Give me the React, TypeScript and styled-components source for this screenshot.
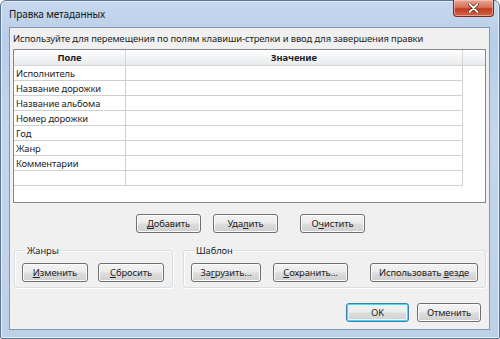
import { Fragment } from "react";
import styled, { createGlobalStyle } from "styled-components";

const GlobalStyle = createGlobalStyle`
  html, body {
    margin: 0;
    padding: 0;
    background: #ffffff;
  }
  body {
    font-family: "Noto Sans", "Open Sans", sans-serif;
    font-size: 9.4px;
    letter-spacing: -0.1px;
    color: #1e1e1e;
  }
`;

const Window = styled.div`
  width: 500px;
  height: 339px;
  box-sizing: border-box;
  display: flex;
  flex-direction: column;
  padding: 0 9px 8px 8px;
  border: 1px solid #5d7590;
  border-radius: 6px 6px 2px 2px;
  background: linear-gradient(180deg, #c6d8ee 0%, #b8cde8 12%, #c3d6ec 40%, #bcd0e8 100%);
  box-shadow: inset 0 0 0 1px #e4eef9;
`;

const TitleBar = styled.div`
  height: 26px;
  display: flex;
  align-items: flex-start;
  justify-content: space-between;
`;

const Title = styled.span`
  margin-top: 6px;
  font-size: 10px;
  color: #101820;
`;

const CloseButton = styled.div`
  width: 41px;
  height: 17px;
  margin-top: -1px;
  margin-right: -4px;
  box-sizing: border-box;
  display: flex;
  align-items: center;
  justify-content: center;
  border: 1px solid #7a2a20;
  border-top: none;
  border-radius: 0 0 4px 4px;
  background: linear-gradient(180deg, #e8a493 0%, #d7735b 45%, #c23c1f 55%, #d2654a 100%);
  box-shadow: inset 0 0 0 1px rgba(255, 220, 210, 0.5);
`;

const Client = styled.div`
  flex: 1;
  box-sizing: border-box;
  display: flex;
  flex-direction: column;
  padding: 0 3px;
  border: 1px solid #8298b2;
  background: #f0f0f0;
`;

const Hint = styled.div`
  height: 21px;
  display: flex;
  align-items: center;
`;

const ListView = styled.div`
  height: 154px;
  box-sizing: border-box;
  border: 1px solid #828790;
  background: #ffffff;
  display: flex;
  flex-direction: column;
`;

const Grid = styled.div`
  display: grid;
  grid-template-columns: 112px 337px 1fr;
`;

const HeaderCell = styled.div<{ $filler?: boolean }>`
  height: 15px;
  display: flex;
  align-items: center;
  justify-content: center;
  font-weight: 700;
  background: linear-gradient(180deg, #ffffff 0%, #f3f4f6 50%, #e9eaec 100%);
  border-bottom: 1px solid #d5d5d5;
  border-right: ${(p) => (p.$filler ? "none" : "1px solid #d5d5d5")};
`;

const Cell = styled.div<{ $filler?: boolean }>`
  height: 14px;
  display: flex;
  align-items: center;
  padding-left: 2px;
  border-bottom: ${(p) => (p.$filler ? "none" : "1px solid #d0d0d0")};
  border-right: ${(p) => (p.$filler ? "none" : "1px solid #d0d0d0")};
  white-space: nowrap;
`;

const ButtonRow = styled.div`
  display: flex;
  gap: 12px;
  margin-top: 11px;
  padding-left: 123px;
`;

const Button = styled.button<{ $w?: number; $default?: boolean; $push?: number }>`
  width: ${(p) => p.$w ?? 65}px;
  height: 19px;
  margin-left: ${(p) => p.$push ?? 0}px;
  padding: 0;
  font-family: "Noto Sans", "Open Sans", sans-serif;
  font-size: 9.4px;
  letter-spacing: -0.1px;
  color: #1e1e1e;
  border: 1px solid ${(p) => (p.$default ? "#3c7fb1" : "#707070")};
  border-radius: 3px;
  background: linear-gradient(
    180deg,
    #f3f3f3 0%,
    #ebebeb 48%,
    #dddddd 52%,
    #cfcfcf 100%
  );
  box-shadow: ${(p) =>
    p.$default
      ? "inset 0 0 0 1px #48d6fa, inset 0 0 0 2px #e6f6fd"
      : "inset 0 0 0 1px #fcfcfc"};
  & u {
    text-decoration-thickness: 1px;
    text-underline-offset: 1px;
  }
`;

const GroupRow = styled.div`
  display: flex;
  gap: 10px;
  margin-top: 11px;
  padding-left: 1px;
`;

const Group = styled.fieldset<{ $w: number }>`
  width: ${(p) => p.$w}px;
  height: 44px;
  box-sizing: border-box;
  margin: 0;
  padding: 6px 0 0 7px;
  display: flex;
  align-items: flex-start;
  border: 1px solid #d5dfe5;
  border-radius: 3px;
  box-shadow: inset 1px 1px 0 #ffffff, 1px 1px 0 #ffffff;
`;

const Legend = styled.legend`
  padding: 0 1px;
  margin-left: 4px;
  font-size: 9.4px;
  color: #1e1e1e;
`;

const Footer = styled.div`
  display: flex;
  justify-content: flex-end;
  gap: 8px;
  margin-top: 15px;
  padding-right: 5px;
`;

const rows = [
  "Исполнитель",
  "Название дорожки",
  "Название альбома",
  "Номер дорожки",
  "Год",
  "Жанр",
  "Комментарии",
  "",
];

function Label({ text, at }: { text: string; at: number }) {
  return (
    <>
      {text.slice(0, at)}
      <u>{text[at]}</u>
      {text.slice(at + 1)}
    </>
  );
}

export default function App() {
  return (
    <>
      <GlobalStyle />
      <Window>
        <TitleBar>
          <Title>Правка метаданных</Title>
          <CloseButton>
            <svg width="11" height="10" viewBox="0 0 11 10">
              <path
                d="M1.5 1 L9.5 9 M9.5 1 L1.5 9"
                stroke="#5a1a10"
                strokeWidth="3.2"
                strokeLinecap="round"
              />
              <path
                d="M1.5 1 L9.5 9 M9.5 1 L1.5 9"
                stroke="#ffffff"
                strokeWidth="1.8"
                strokeLinecap="round"
              />
            </svg>
          </CloseButton>
        </TitleBar>
        <Client>
          <Hint>
            Используйте для перемещения по полям клавиши-стрелки и ввод для
            завершения правки
          </Hint>
          <ListView>
            <Grid>
              <HeaderCell>Поле</HeaderCell>
              <HeaderCell>Значение</HeaderCell>
              <HeaderCell $filler />
              {rows.map((r, i) => (
                <Fragment key={i}>
                  <Cell>{r}</Cell>
                  <Cell />
                  <Cell $filler />
                </Fragment>
              ))}
            </Grid>
          </ListView>
          <ButtonRow>
            <Button>
              <Label text="Добавить" at={0} />
            </Button>
            <Button>
              <Label text="Удалить" at={3} />
            </Button>
            <Button $push={10}>
              <Label text="Очистить" at={1} />
            </Button>
          </ButtonRow>
          <GroupRow>
            <Group $w={160}>
              <Legend>Жанры</Legend>
              <Button $w={66}>
                <Label text="Изменить" at={0} />
              </Button>
              <Button $w={66} $push={10}>
                <Label text="Сбросить" at={0} />
              </Button>
            </Group>
            <Group $w={305}>
              <Legend>Шаблон</Legend>
              <Button $w={70}>
                <Label text="Загрузить..." at={2} />
              </Button>
              <Button $w={75} $push={12}>
                <Label text="Сохранить..." at={0} />
              </Button>
              <Button $w={108} $push={22}>
                <Label text="Использовать везде" at={13} />
              </Button>
            </Group>
          </GroupRow>
          <Footer>
            <Button $w={63} $default>
              OK
            </Button>
            <Button $w={64}>Отменить</Button>
          </Footer>
        </Client>
      </Window>
    </>
  );
}
